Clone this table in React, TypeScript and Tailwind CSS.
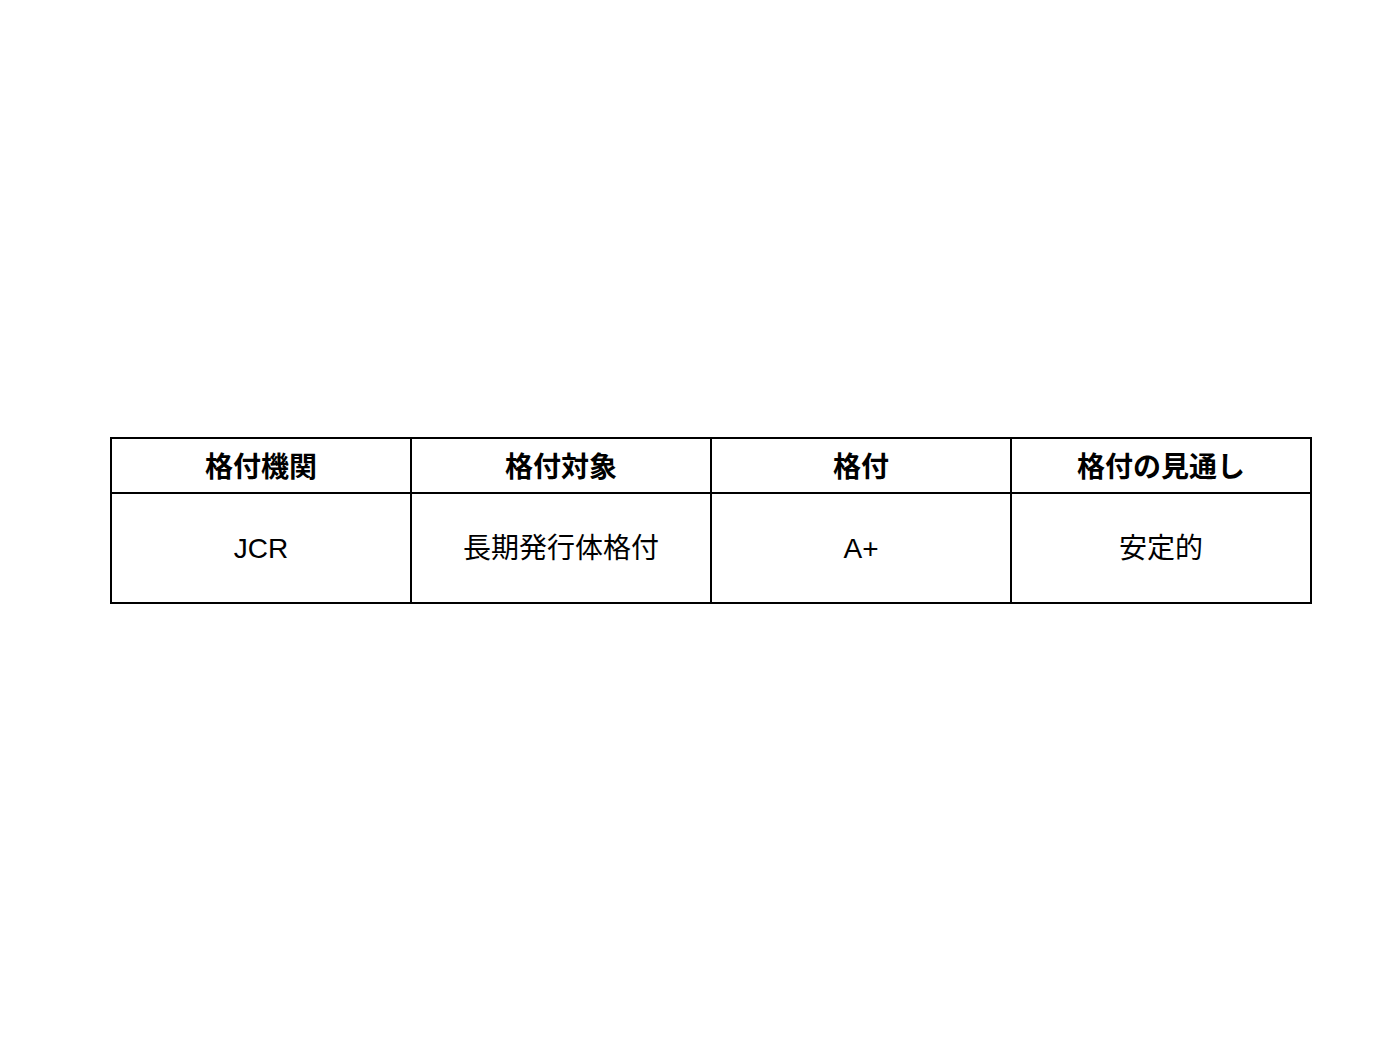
export default function App() {
  const headers = ["格付機関", "格付対象", "格付", "格付の見通し"];
  const values = ["JCR", "長期発行体格付", "A+", "安定的"];
  return (
    <div className="w-[1400px] h-[1050px] bg-white pt-[437px] pl-[110px] [font-family:'Liberation_Sans','Noto_Sans_CJK_JP',sans-serif] text-black">
      <table className="border-collapse border-2 border-black w-[1202px] table-fixed">
        <thead>
          <tr className="h-[55px]">
            {headers.map((h) => (
              <th key={h} className="border-2 border-black text-center text-[28px] font-bold leading-none p-0 pt-[4px]">
                {h}
              </th>
            ))}
          </tr>
        </thead>
        <tbody>
          <tr className="h-[110px]">
            {values.map((v) => (
              <td key={v} className="border-2 border-black text-center text-[28px] font-normal leading-none p-0 pt-[2px]">
                {v}
              </td>
            ))}
          </tr>
        </tbody>
      </table>
    </div>
  );
}
